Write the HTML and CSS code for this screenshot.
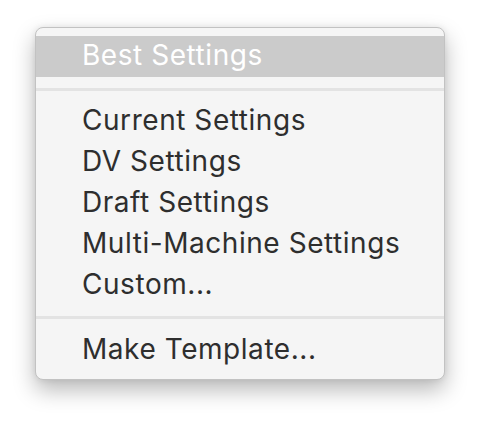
FILE: index.html
```html
<!DOCTYPE html>
<html>
<head>
<meta charset="utf-8">
<link rel="stylesheet" href="styles.css">
</head>
<body>
<div class="menu">
  <div class="item active">Best Settings</div>
  <div class="sep"></div>
  <div class="item">Current Settings</div>
  <div class="item">DV Settings</div>
  <div class="item">Draft Settings</div>
  <div class="item">Multi-Machine Settings</div>
  <div class="item">Custom...</div>
  <div class="sep sep2"></div>
  <div class="item">Make Template...</div>
</div>
</body>
</html>
```
FILE: styles.css
```css
html, body {
  margin: 0;
  padding: 0;
  background: #ffffff;
  min-height: 100vh;
}
body {
  padding: 27px 0 0 35px;
  box-sizing: border-box;
  font-family: Inter, "Liberation Sans", Arial, sans-serif;
}
.menu {
  width: 408px;
  background: #f5f5f5;
  border: 1px solid #c2c2c2;
  border-radius: 8px;
  padding: 8px 0;
  box-shadow: 0 10px 22px rgba(0, 0, 0, 0.28), 0 0 6px rgba(0, 0, 0, 0.08);
}
.item {
  height: 41px;
  line-height: 39px;
  font-size: 28px;
  letter-spacing: 0.55px;
  color: #2e2e2e;
  padding-left: 46px;
  white-space: nowrap;
}
.item.active {
  background: #cbcbcb;
  color: #ffffff;
}
.sep {
  height: 3px;
  background: #e3e3e3;
  margin: 11px 0 10px;
}
.sep2 {
  margin: 10px 0 11px;
}
```
